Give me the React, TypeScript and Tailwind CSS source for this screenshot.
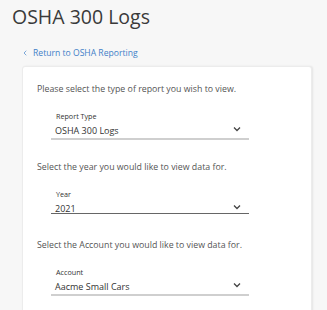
import { ChevronLeft } from 'lucide-react'

const font = { fontFamily: '"Open Sans", "Liberation Sans", sans-serif' }

function Caret() {
    return (
        <svg width="8" height="6" viewBox="0 0 8 6" className="mt-[1px]">
            <polyline points="1,1.5 4,4.5 7,1.5" fill="none" stroke="#444" strokeWidth="1.3" />
        </svg>
    )
}

function Select({ label, value, dark }: { label: string; value: string; dark?: boolean }) {
    return (
        <div className="ml-[14px] w-[198px]">
            <div className="pl-[5px] text-[7.2px] font-medium leading-[10px] text-[#333]">{label}</div>
            <div
                className={
                    'mt-[4px] flex items-start justify-between pl-[4px] pr-[8px] ' +
                    (dark ? 'h-[10px] border-b border-[#666] box-content' : 'h-[13px] border-b-2 border-[#cfcfcf] box-content')
                }
            >
                <span className="text-[9px] leading-[12px] text-[#333]">{value}</span>
                <Caret />
            </div>
        </div>
    )
}

function Section({ prompt, label, value, dark }: { prompt: string; label: string; value: string; dark?: boolean }) {
    return (
        <div className="h-[78px] flex flex-col">
            <p className="text-[8.8px] text-[#555] leading-[12px]">{prompt}</p>
            <div className="mt-[16px]">
                <Select label={label} value={value} dark={dark} />
            </div>
        </div>
    )
}

export default function App() {
    return (
        <div style={font} className="w-[327px] h-[310px] bg-[#f7f7f7] overflow-hidden">
            <div className="pl-[12px] pt-[4px]">
                <h1 className="text-[19.5px] leading-[26px] text-[#3a3a3a]">OSHA 300 Logs</h1>
            </div>
            <div className="flex items-center gap-[4px] pl-[21px] mt-[17px] text-[#3f80c8] text-[8.6px] leading-[12px]">
                <ChevronLeft size={8} strokeWidth={2} />
                <span>Return to OSHA Reporting</span>
            </div>
            <div className="ml-[22px] mt-[7px] w-[290px] h-[260px] bg-white rounded-[3px] border border-[#ececec] shadow-[1px_0_2px_rgba(0,0,0,0.08)] pl-[14px] pt-[16px] flex flex-col">
                <Section prompt="Please select the type of report you wish to view." label="Report Type" value="OSHA 300 Logs" />
                <Section prompt="Select the year you would like to view data for." label="Year" value="2021" dark />
                <Section prompt="Select the Account you would like to view data for." label="Account" value="Aacme Small Cars" />
            </div>
        </div>
    )
}
